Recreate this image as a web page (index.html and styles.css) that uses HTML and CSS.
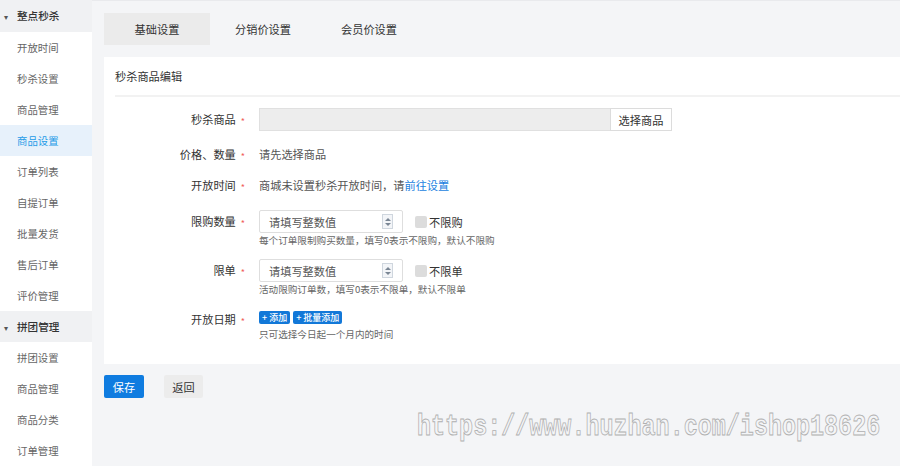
FILE: index.html
```html
<!DOCTYPE html>
<html lang="zh-CN">
<head>
  <meta charset="UTF-8" />
  <meta name="viewport" content="width=device-width, initial-scale=1.0"/>
  <title>秒杀商品编辑</title>
  <link rel="stylesheet" href="styles.css">
</head>
<body>
  <div class="sidebar">
    <div class="menu-group"><span class="caret">▾</span>整点秒杀</div>
    <a class="menu-item">开放时间</a>
    <a class="menu-item">秒杀设置</a>
    <a class="menu-item">商品管理</a>
    <a class="menu-item active">商品设置</a>
    <a class="menu-item">订单列表</a>
    <a class="menu-item">自提订单</a>
    <a class="menu-item">批量发货</a>
    <a class="menu-item">售后订单</a>
    <a class="menu-item">评价管理</a>
    <div class="menu-group"><span class="caret">▾</span>拼团管理</div>
    <a class="menu-item">拼团设置</a>
    <a class="menu-item">商品管理</a>
    <a class="menu-item">商品分类</a>
    <a class="menu-item">订单管理</a>
  </div>

  <div class="main">
    <div class="tabs">
      <div class="tab active">基础设置</div>
      <div class="tab">分销价设置</div>
      <div class="tab">会员价设置</div>
    </div>

    <div class="card">
      <div class="card-title">秒杀商品编辑</div>

      <div class="row row-first">
        <label class="row-label">秒杀商品<i>*</i></label>
        <div class="field inline">
          <input class="goods-input" type="text" disabled />
          <button class="pick-btn" type="button">选择商品</button>
        </div>
      </div>

      <div class="row">
        <label class="row-label">价格、数量<i>*</i></label>
        <div class="field text">请先选择商品</div>
      </div>

      <div class="row row-tight">
        <label class="row-label">开放时间<i>*</i></label>
        <div class="field text">商城未设置秒杀开放时间，请<a class="link">前往设置</a></div>
      </div>

      <div class="row row-wide">
        <label class="row-label">限购数量<i>*</i></label>
        <div class="field">
          <div class="inline">
            <div class="num-input">
              <span class="placeholder">请填写整数值</span>
              <span class="spin"><b class="up"></b><b class="down"></b></span>
            </div>
            <span class="check"><span class="box"></span>不限购</span>
          </div>
          <div class="help">每个订单限制购买数量，填写0表示不限购，默认不限购</div>
        </div>
      </div>

      <div class="row">
        <label class="row-label">限单<i>*</i></label>
        <div class="field">
          <div class="inline">
            <div class="num-input">
              <span class="placeholder">请填写整数值</span>
              <span class="spin"><b class="up"></b><b class="down"></b></span>
            </div>
            <span class="check"><span class="box"></span>不限单</span>
          </div>
          <div class="help">活动限购订单数，填写0表示不限单，默认不限单</div>
        </div>
      </div>

      <div class="row">
        <label class="row-label">开放日期<i>*</i></label>
        <div class="field">
          <div class="tag-btns">
            <span class="tag-btn">+ 添加</span>
            <span class="tag-btn">+ 批量添加</span>
          </div>
          <div class="help">只可选择今日起一个月内的时间</div>
        </div>
      </div>
    </div>

    <div class="actions">
      <button class="btn btn-primary" type="button">保存</button>
      <button class="btn btn-default" type="button">返回</button>
    </div>

    <div class="watermark">https://www.huzhan.com/ishop18626</div>
  </div>
</body>
</html>
```

FILE: styles.css
```css
* {
  box-sizing: border-box;
}
body {
  margin: 0;
  display: flex;
  height: 466px;
  overflow: hidden;
  font-family: "Noto Sans CJK SC", "Noto Sans", sans-serif;
  font-size: 11.2px;
  color: #333;
  background: #f4f5f7;
}

/* left menu */
.sidebar {
  width: 92px;
  flex-shrink: 0;
  background: #fff;
}
.menu-group {
  height: 32px;
  line-height: 32px;
  padding-left: 4px;
  background: #f0f1f3;
  color: #333;
  font-size: 10.6px;
  font-weight: 500;
}
.menu-item + .menu-group {
  height: 31px;
  line-height: 31px;
}
.caret {
  display: inline-block;
  width: 13px;
  font-size: 8px;
  color: #555;
}
.menu-item {
  display: block;
  height: 31px;
  line-height: 31px;
  padding-left: 17px;
  color: #666;
  font-size: 10.4px;
}
.menu-item.active {
  background: #e7f1fb;
  color: #1e9be8;
}

/* right side */
.main {
  position: relative;
  flex: 1;
  padding-left: 12px;
  border-top: 1px solid #e9eaed;
}
.tabs {
  display: flex;
  padding-top: 12px;
}
.tab {
  width: 106px;
  height: 32px;
  line-height: 32px;
  text-align: center;
  color: #333;
}
.tab.active {
  background: #ebebeb;
}

.card {
  margin-top: 12px;
  background: #fff;
  padding-bottom: 23px;
}
.card-title {
  height: 40px;
  line-height: 38px;
  margin-left: 11px;
  border-bottom: 2px solid #f2f2f2;
}

.row {
  display: flex;
  margin-top: 12px;
}
.row-first {
  margin-top: 11px;
}
.row-tight {
  margin-top: 8px;
}
.row-wide {
  margin-top: 13px;
}
.row-label {
  width: 155px;
  height: 23px;
  flex-shrink: 0;
  padding-right: 14px;
  text-align: right;
  line-height: 23px;
}
.row-label i {
  font-style: normal;
  color: #f0605a;
  font-size: 9px;
  line-height: 0;
  margin-left: 5px;
  position: relative;
  top: 1px;
}
.field.text {
  line-height: 23px;
  color: #555;
}
.inline {
  display: flex;
  align-items: center;
}
.link {
  color: #1a7fe0;
}

.goods-input {
  width: 351px;
  height: 23px;
  margin: 0;
  border: 1px solid #e0e0e0;
  border-right: none;
  background: #ededed;
}
.pick-btn {
  width: 62px;
  height: 23px;
  margin: 0;
  padding: 0;
  border: 1px solid #dcdcdc;
  background: #fff;
  font-family: inherit;
  font-size: 11.2px;
  color: #333;
}

.num-input {
  display: flex;
  align-items: center;
  justify-content: space-between;
  width: 144px;
  height: 23px;
  padding: 0 9px 0 9px;
  border: 1px solid #dedede;
  border-radius: 2px;
}
.placeholder {
  color: #555;
}
.spin {
  display: flex;
  flex-direction: column;
  justify-content: center;
  gap: 2px;
  width: 11px;
  height: 15px;
  border: 1px solid #cfd6de;
  background: #f3f5f8;
  align-items: center;
}
.spin b {
  width: 0;
  height: 0;
  border-left: 3px solid transparent;
  border-right: 3px solid transparent;
}
.spin .up {
  border-bottom: 3px solid #7a8694;
}
.spin .down {
  border-top: 3px solid #7a8694;
}
.check {
  display: flex;
  align-items: center;
  margin-left: 12px;
}
.check .box {
  width: 12px;
  height: 12px;
  margin-right: 2px;
  border-radius: 2px;
  background: #dcdcdc;
}
.help {
  line-height: 14px;
  font-size: 9.6px;
  color: #666;
}

.tag-btns {
  display: flex;
  gap: 3px;
  height: 19px;
  align-items: center;
}
.tag-btn {
  height: 13px;
  line-height: 13px;
  padding: 0 3px;
  border-radius: 2px;
  background: #1278d8;
  color: #fff;
  font-size: 9px;
  font-weight: 500;
}

.actions {
  display: flex;
  gap: 20px;
  margin-top: 11px;
}
.btn {
  height: 23px;
  margin: 0;
  padding: 0;
  border: none;
  border-radius: 2px;
  font-family: inherit;
  font-size: 11.2px;
}
.btn-primary {
  width: 40px;
  background: #0f7ce0;
  color: #fff;
}
.btn-default {
  width: 39px;
  background: #ececec;
  color: #333;
}

/* site stamp over the page */
.watermark {
  position: absolute;
  left: 325px;
  top: 410px;
  font-family: "Liberation Mono", monospace;
  font-size: 23.4px;
  font-weight: bold;
  color: transparent;
  -webkit-text-stroke: 0.7px #b0b0b0;
  transform: scaleY(1.25);
  transform-origin: left top;
  white-space: nowrap;
}
```
